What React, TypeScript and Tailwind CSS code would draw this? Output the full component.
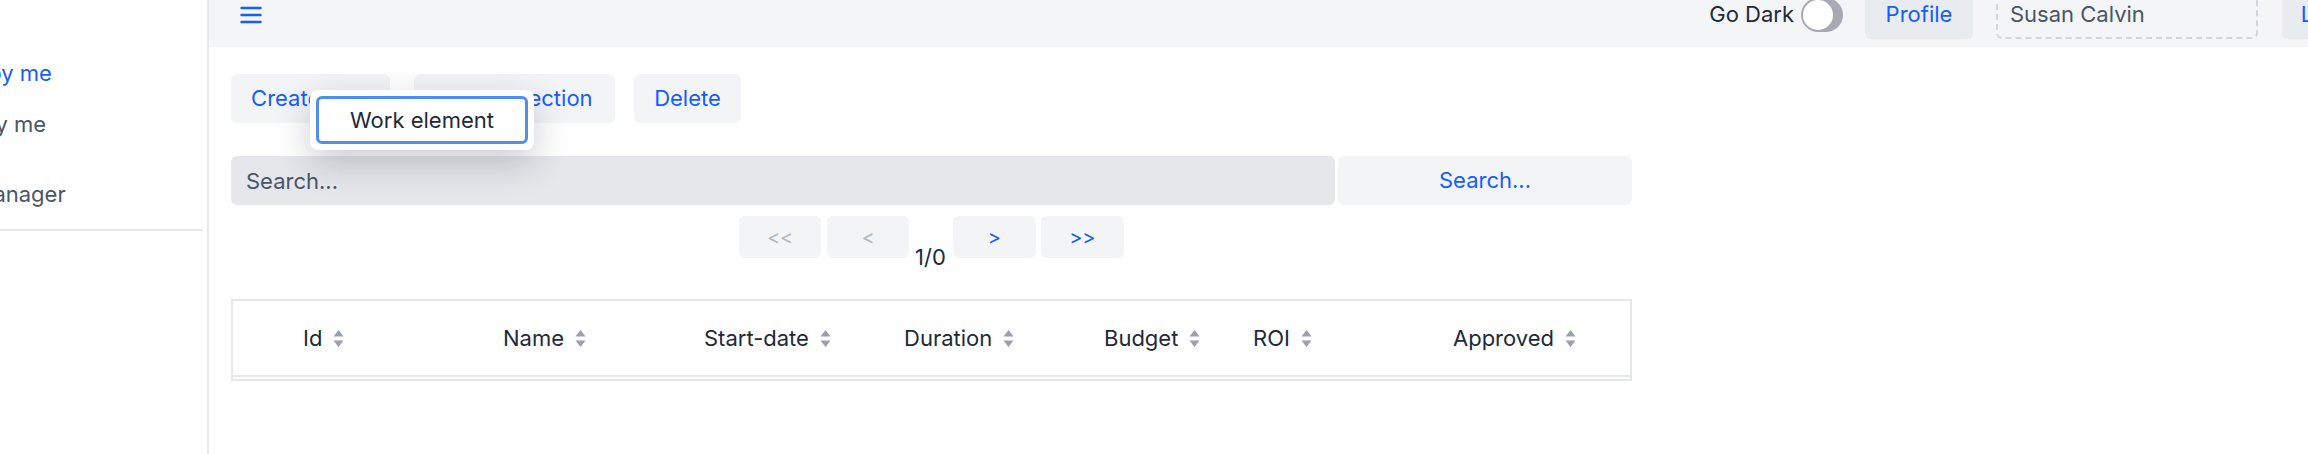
import React from "react"

const columns = [
  { label: "Id", w: "w-[200px]" },
  { label: "Name", w: "w-[201px]" },
  { label: "Start-date", w: "w-[200px]" },
  { label: "Duration", w: "w-[200px]" },
  { label: "Budget", w: "w-[149px]" },
  { label: "ROI", w: "w-[200px]" },
  { label: "Approved", w: "w-[160px]" },
]

const SortIcon = () => (
  <svg width="11" height="19" viewBox="0 0 11 19" className="ml-[11px] shrink-0">
    <polygon points="5.5,1 10.5,7.5 0.5,7.5" fill="#9aa1ad" />
    <polygon points="0.5,11.5 10.5,11.5 5.5,18" fill="#9aa1ad" />
  </svg>
)

const Sidebar = () => (
  <div className="w-[349px] shrink-0 border-r-2 border-gray-200 bg-white flex flex-col pt-[77px] pl-[21px]">
    <a className="text-[22px] leading-[28px] text-blue-600 whitespace-nowrap">Approved by me</a>
    <a className="mt-[23px] text-[22px] leading-[28px] text-gray-600 whitespace-nowrap">Reported by me</a>
    <a className="mt-[42px] text-[22px] leading-[28px] text-gray-600 whitespace-nowrap">Portfolio manager</a>
    <div className="mt-[21px] -ml-[21px] mr-[4px] h-[2px] bg-gray-200"></div>
  </div>
)

const Header = () => (
  <div className="h-[65px] bg-[#f4f5f7] flex items-center pl-[31px] pr-[37px]">
    <svg width="22" height="18" viewBox="0 0 22 18" className="text-blue-600">
      <g stroke="currentColor" strokeWidth="2.4" strokeLinecap="round">
        <line x1="1.5" y1="2" x2="20.5" y2="2" />
        <line x1="1.5" y1="9" x2="20.5" y2="9" />
        <line x1="1.5" y1="16" x2="20.5" y2="16" />
      </g>
    </svg>
    <div className="ml-auto flex items-center">
      <span className="text-[22px] text-gray-800 mr-[7px]">Go Dark</span>
      <div className="w-[42px] h-[34px] rounded-full bg-[#a6abb3] flex items-center pl-[2px] mr-[22px]">
        <div className="w-[30px] h-[30px] rounded-full bg-white"></div>
      </div>
      <button className="w-[108px] h-[48px] rounded-md bg-[#e8ebef] text-[22px] text-blue-600 mr-[23px]">
        Profile
      </button>
      <div className="w-[262px] h-[48px] rounded-md border-2 border-dashed border-gray-300 flex items-center pl-[12px] text-[22px] text-gray-600 mr-[24px]">
        Susan Calvin
      </div>
      <button className="w-[110px] h-[48px] rounded-md bg-[#e8ebef] text-[22px] text-blue-600">Logout</button>
    </div>
  </div>
)

const Toolbar = () => (
  <div className="flex mt-[27px]">
    <div className="relative">
      <button className="w-[159px] h-[49px] rounded-md bg-gray-100 text-[22px] text-blue-600 whitespace-nowrap">
        Create new
      </button>
      <div className="absolute left-[79px] top-[16px] w-[224px] bg-white rounded-lg p-[6px] shadow-[0_12px_36px_rgba(15,23,42,0.22)] z-10">
        <div className="h-[48px] rounded-md border-[3px] border-[#4d8ef2] flex items-center justify-center text-[22px] text-gray-800">
          Work element
        </div>
      </div>
    </div>
    <button className="ml-[24px] w-[201px] h-[49px] rounded-md bg-gray-100 text-[22px] text-blue-600 whitespace-nowrap">
      Open selection
    </button>
    <button className="ml-[19px] w-[107px] h-[49px] rounded-md bg-gray-100 text-[22px] text-blue-600">Delete</button>
  </div>
)

const Pager = () => (
  <div className="flex justify-center mt-[11px] h-[42px]">
    <button className="w-[82px] h-[42px] rounded-md bg-gray-100 text-[20px] text-[#b3b9c2]">&lt;&lt;</button>
    <button className="ml-[6px] w-[82px] h-[42px] rounded-md bg-gray-100 text-[20px] text-[#b3b9c2]">&lt;</button>
    <span className="ml-[6px] mt-[27px] text-[22px] leading-[28px] text-gray-800">1/0</span>
    <button className="ml-[7px] w-[83px] h-[42px] rounded-md bg-gray-100 text-[20px] text-blue-600">&gt;</button>
    <button className="ml-[5px] w-[83px] h-[42px] rounded-md bg-gray-100 text-[20px] text-blue-600">&gt;&gt;</button>
  </div>
)

const Table = () => (
  <div className="mt-[41px] border-2 border-gray-200">
    <div className="h-[76px] border-b-2 border-gray-200 flex items-center pl-[70px]">
      {columns.map((c) => (
        <div key={c.label} className={`${c.w} shrink-0 flex items-center text-[22px] text-gray-800 whitespace-nowrap`}>
          {c.label}
          <SortIcon />
        </div>
      ))}
    </div>
    <div className="h-[2px]"></div>
  </div>
)

export default function App() {
  return (
    <div className="w-[2308px] h-[454px] overflow-hidden bg-white font-['Inter',sans-serif]">
      <div className="flex -mt-[18px] -ml-[140px] h-[472px]">
        <Sidebar />
        <div className="w-[2220px] shrink-0 flex flex-col">
          <Header />
          <div className="pl-[22px]">
            <div className="w-[1401px]">
              <Toolbar />
              <div className="flex mt-[33px]">
                <input
                  className="w-[1104px] h-[49px] rounded-md bg-gray-200 pl-[15px] text-[22px] text-gray-800 placeholder:text-gray-600 outline-none"
                  placeholder="Search..."
                />
                <button className="ml-[3px] flex-1 h-[49px] rounded-md bg-gray-100 text-[22px] text-blue-600">
                  Search...
                </button>
              </div>
              <Pager />
              <Table />
            </div>
          </div>
        </div>
      </div>
    </div>
  )
}
